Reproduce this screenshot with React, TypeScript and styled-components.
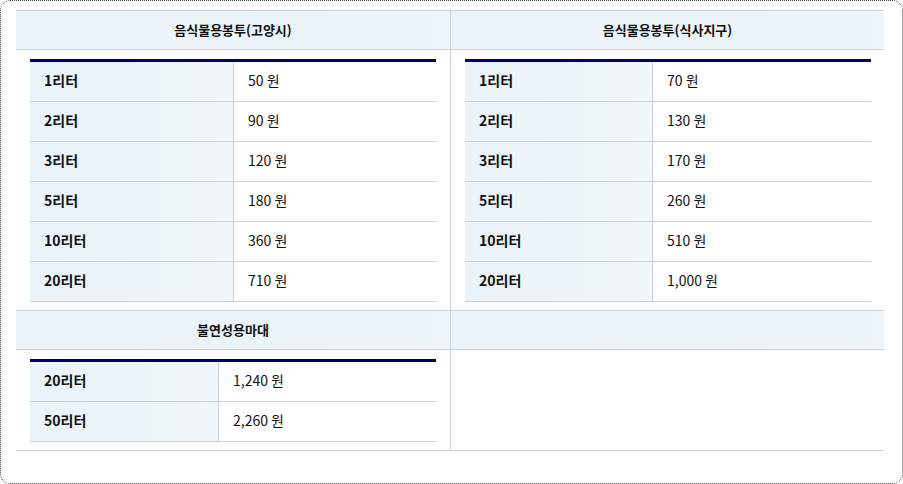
import React from "react";
import styled, { createGlobalStyle } from "styled-components";

const Global = createGlobalStyle`
  html, body { margin: 0; padding: 0; background: #fff; }
  body { font-family: "Noto Sans CJK KR", "Noto Sans", sans-serif; color: #111; }
`;

const Frame = styled.div`
  box-sizing: border-box;
  width: 903px;
  height: 484px;
  border: 1px dotted #444;
  border-radius: 10px;
  padding: 9px 18px 0 15px;
`;

const Outer = styled.div`
  display: grid;
  grid-template-columns: 434px 434px;
  border-bottom: 1px solid #c9cad8;
`;

const Head = styled.div<{ $right?: boolean }>`
  height: 40px;
  display: flex;
  align-items: center;
  justify-content: center;
  padding-bottom: 2px;
  box-sizing: border-box;
  font-size: 13px;
  font-weight: 700;
  background: linear-gradient(90deg, #eaf3f9, #edf5fa);
  border-top: 1px solid #cfd1dd;
  border-bottom: 1px solid #cfd1dd;
  border-left: ${(p) => (p.$right ? "1px solid #cfd1dd" : "none")};
`;

const Cell = styled.div<{ $right?: boolean }>`
  padding: 9px 14px 8px 14px;
  border-left: ${(p) => (p.$right ? "1px solid #cfd1dd" : "none")};
`;

const Table = styled.div<{ $label: number }>`
  display: grid;
  grid-template-columns: ${(p) => p.$label}px 1fr;
  border-top: 3px solid #00006e;
  width: 406px;
`;

const Label = styled.div`
  height: 40px;
  box-sizing: border-box;
  display: flex;
  align-items: center;
  padding: 0 0 4px 14px;
  font-size: 14px;
  font-weight: 700;
  background: linear-gradient(90deg, #eaf3f9, #f0f6fa);
  border-bottom: 1px solid #cfd1dd;
  border-right: 1px solid #cfd1dd;
`;

const Value = styled.div`
  height: 40px;
  box-sizing: border-box;
  display: flex;
  align-items: center;
  padding: 0 0 4px 14px;
  font-size: 14px;
  border-bottom: 1px solid #cfd1dd;
`;

const PriceTable = ({ rows, label }: { rows: [string, string][]; label: number }) => (
  <Table $label={label}>
    {rows.map(([a, b]) => (
      <React.Fragment key={a}>
        <Label>{a}</Label>
        <Value>{b}</Value>
      </React.Fragment>
    ))}
  </Table>
);

export default function App() {
  return (
    <>
      <Global />
      <Frame>
        <Outer>
          <Head>음식물용봉투(고양시)</Head>
          <Head $right>음식물용봉투(식사지구)</Head>
          <Cell>
            <PriceTable
              label={204}
              rows={[["1리터", "50 원"], ["2리터", "90 원"], ["3리터", "120 원"], ["5리터", "180 원"], ["10리터", "360 원"], ["20리터", "710 원"]]}
            />
          </Cell>
          <Cell $right>
            <PriceTable
              label={188}
              rows={[["1리터", "70 원"], ["2리터", "130 원"], ["3리터", "170 원"], ["5리터", "260 원"], ["10리터", "510 원"], ["20리터", "1,000 원"]]}
            />
          </Cell>
          <Head>불연성용마대</Head>
          <Head $right />
          <Cell>
            <PriceTable label={189} rows={[["20리터", "1,240 원"], ["50리터", "2,260 원"]]} />
          </Cell>
          <Cell $right />
        </Outer>
      </Frame>
    </>
  );
}
